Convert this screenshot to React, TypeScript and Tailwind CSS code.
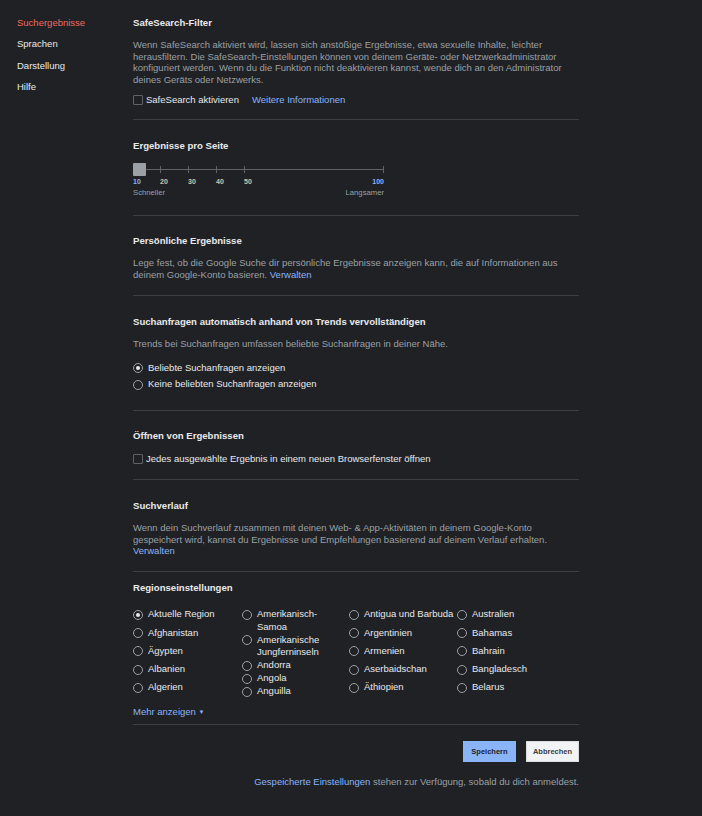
import React from 'react';

const FONT = { fontFamily: '"Liberation Sans", Arial, sans-serif' };

function Checkbox({ label }: { label: string }) {
  return (
    <label className="flex items-center h-[12px] text-[9.5px] text-[#e8eaed]">
      <span className="w-[10px] h-[10px] border border-[#5f6368] rounded-[1px] mr-[3px] shrink-0" />
      <span>{label}</span>
    </label>
  );
}

function Radio({ label, checked = false }: { label: string; checked?: boolean }) {
  return (
    <label className="flex items-start text-[9.5px] leading-[12.5px] text-[#e8eaed]">
      <span className="w-[10px] h-[10px] mt-[1.5px] mr-[5px] rounded-full border border-[#9aa0a6] flex items-center justify-center shrink-0">
        {checked && <span className="w-[4px] h-[4px] rounded-full bg-[#e8eaed]" />}
      </span>
      <span>{label}</span>
    </label>
  );
}

function Heading({ children }: { children: React.ReactNode }) {
  return <h2 className="text-[9.6px] leading-[13px] font-bold text-[#e8eaed]">{children}</h2>;
}

function Para({ children, className = '' }: { children: React.ReactNode; className?: string }) {
  return <p className={`text-[9.5px] leading-[11.5px] text-[#9aa0a6] ${className}`}>{children}</p>;
}

const ticks = [
  { v: '10', x: 0, color: 'text-[#8ab4f8]' },
  { v: '20', x: 27, color: 'text-[#d9c2a0]' },
  { v: '30', x: 55, color: 'text-[#d9c2a0]' },
  { v: '40', x: 83, color: 'text-[#d9c2a0]' },
  { v: '50', x: 111, color: 'text-[#d9c2a0]' },
];

function Slider() {
  return (
    <div className="w-[251px] mt-[11px]">
      <div className="relative h-[13px]">
        <div className="absolute left-0 right-0 top-[6px] h-px bg-[#5f6368]" />
        {[27, 55, 83, 111, 250].map((x) => (
          <div key={x} className="absolute top-[3px] w-px h-[7px] bg-[#5f6368]" style={{ left: x }} />
        ))}
        <div className="absolute left-0 top-0 w-[13px] h-[13px] bg-[#9aa0a6] rounded-[1px]" />
      </div>
      <div className="relative h-[11px] text-[7px] leading-[11px] font-bold">
        {ticks.map((t) => (
          <span key={t.v} className={`absolute ${t.color}`} style={{ left: t.x }}>
            {t.v}
          </span>
        ))}
        <span className="absolute right-0 text-[#8ab4f8]">100</span>
      </div>
      <div className="flex justify-between text-[7.7px] leading-[11px] text-[#9aa0a6]">
        <span>Schneller</span>
        <span>Langsamer</span>
      </div>
    </div>
  );
}

const col1 = ['Afghanistan', 'Ägypten', 'Albanien', 'Algerien'];
const col3 = ['Antigua und Barbuda', 'Argentinien', 'Armenien', 'Aserbaidschan', 'Äthiopien'];
const col4 = ['Australien', 'Bahamas', 'Bahrain', 'Bangladesch', 'Belarus'];

export default function App() {
  return (
    <div className="min-h-screen bg-[#202124] flex" style={FONT}>
      <nav className="w-[133px] pl-[17px] pt-[16px] text-[9.5px] leading-[13px] flex flex-col gap-[8.3px] shrink-0">
        <a className="text-[#f06a5f]">Suchergebnisse</a>
        <a className="text-[#e8eaed]">Sprachen</a>
        <a className="text-[#e8eaed]">Darstellung</a>
        <a className="text-[#e8eaed]">Hilfe</a>
      </nav>

      <main className="w-[446px] pb-[20px]">
        <section className="pt-[16px] pb-[12px] border-b border-[#3c4043]">
          <Heading>SafeSearch-Filter</Heading>
          <Para className="mt-[10px]">
            Wenn SafeSearch aktiviert wird, lassen sich anstößige Ergebnisse, etwa sexuelle Inhalte, leichter
            herausfiltern. Die SafeSearch-Einstellungen können von deinem Geräte- oder Netzwerkadministrator
            konfiguriert werden. Wenn du die Funktion nicht deaktivieren kannst, wende dich an den Administrator
            deines Geräts oder Netzwerks.
          </Para>
          <div className="mt-[8px] flex items-center gap-[13px]">
            <Checkbox label="SafeSearch aktivieren" />
            <a className="text-[9.5px] text-[#8ab4f8]">Weitere Informationen</a>
          </div>
        </section>

        <section className="pt-[19px] pb-[17px] border-b border-[#3c4043]">
          <Heading>Ergebnisse pro Seite</Heading>
          <Slider />
        </section>

        <section className="pt-[18px] pb-[15px] border-b border-[#3c4043]">
          <Heading>Persönliche Ergebnisse</Heading>
          <Para className="mt-[10px]">
            Lege fest, ob die Google Suche dir persönliche Ergebnisse anzeigen kann, die auf Informationen aus
            deinem Google-Konto basieren. <span className="text-[#8ab4f8]">Verwalten</span>
          </Para>
        </section>

        <section className="pt-[19px] pb-[19px] border-b border-[#3c4043]">
          <Heading>Suchanfragen automatisch anhand von Trends vervollständigen</Heading>
          <Para className="mt-[10px]">Trends bei Suchanfragen umfassen beliebte Suchanfragen in deiner Nähe.</Para>
          <div className="mt-[12px] flex flex-col gap-[4px]">
            <Radio label="Beliebte Suchanfragen anzeigen" checked />
            <Radio label="Keine beliebten Suchanfragen anzeigen" />
          </div>
        </section>

        <section className="pt-[18.5px] pb-[14px] border-b border-[#3c4043]">
          <Heading>Öffnen von Ergebnissen</Heading>
          <div className="mt-[10.5px]">
            <Checkbox label="Jedes ausgewählte Ergebnis in einem neuen Browserfenster öffnen" />
          </div>
        </section>

        <section className="pt-[19.5px] pb-[14px] border-b border-[#3c4043]">
          <Heading>Suchverlauf</Heading>
          <Para className="mt-[10px]">
            Wenn dein Suchverlauf zusammen mit deinen Web- &amp; App-Aktivitäten in deinem Google-Konto
            gespeichert wird, kannst du Ergebnisse und Empfehlungen basierend auf deinem Verlauf erhalten.{' '}
            <span className="text-[#8ab4f8]">Verwalten</span>
          </Para>
        </section>

        <section className="pt-[9.5px] pb-[6.5px] border-b border-[#3c4043]">
          <Heading>Regionseinstellungen</Heading>
          <div className="mt-[14px] flex">
            <div className="w-[109px] flex flex-col gap-[5.75px]">
              <Radio label="Aktuelle Region" checked />
              {col1.map((c) => (
                <Radio key={c} label={c} />
              ))}
            </div>
            <div className="w-[107px] flex flex-col gap-[0.5px] pr-[8px]">
              <Radio label="Amerikanisch-Samoa" />
              <Radio label="Amerikanische Jungferninseln" />
              <Radio label="Andorra" />
              <Radio label="Angola" />
              <Radio label="Anguilla" />
            </div>
            <div className="w-[108px] flex flex-col gap-[5.75px]">
              {col3.map((c) => (
                <Radio key={c} label={c} />
              ))}
            </div>
            <div className="flex-1 flex flex-col gap-[5.75px]">
              {col4.map((c) => (
                <Radio key={c} label={c} />
              ))}
            </div>
          </div>
          <a className="mt-[8px] block text-[9.5px] leading-[11px] text-[#8ab4f8]">
            Mehr anzeigen <span className="text-[6px] align-middle">▼</span>
          </a>
        </section>

        <div className="mt-[16px] flex justify-end gap-[10px]">
          <button className="w-[53px] h-[21px] bg-[#8ab4f8] text-[#202124] text-[7.5px] font-bold">Speichern</button>
          <button className="w-[53px] h-[21px] bg-[#f1f3f4] border border-[#dadce0] text-[#3c4043] text-[7.5px] font-bold">
            Abbrechen
          </button>
        </div>
        <p className="mt-[14px] text-right text-[9.5px] leading-[11px] text-[#9aa0a6]">
          <span className="text-[#8ab4f8]">Gespeicherte Einstellungen</span> stehen zur Verfügung, sobald du dich anmeldest.
        </p>
      </main>
    </div>
  );
}
